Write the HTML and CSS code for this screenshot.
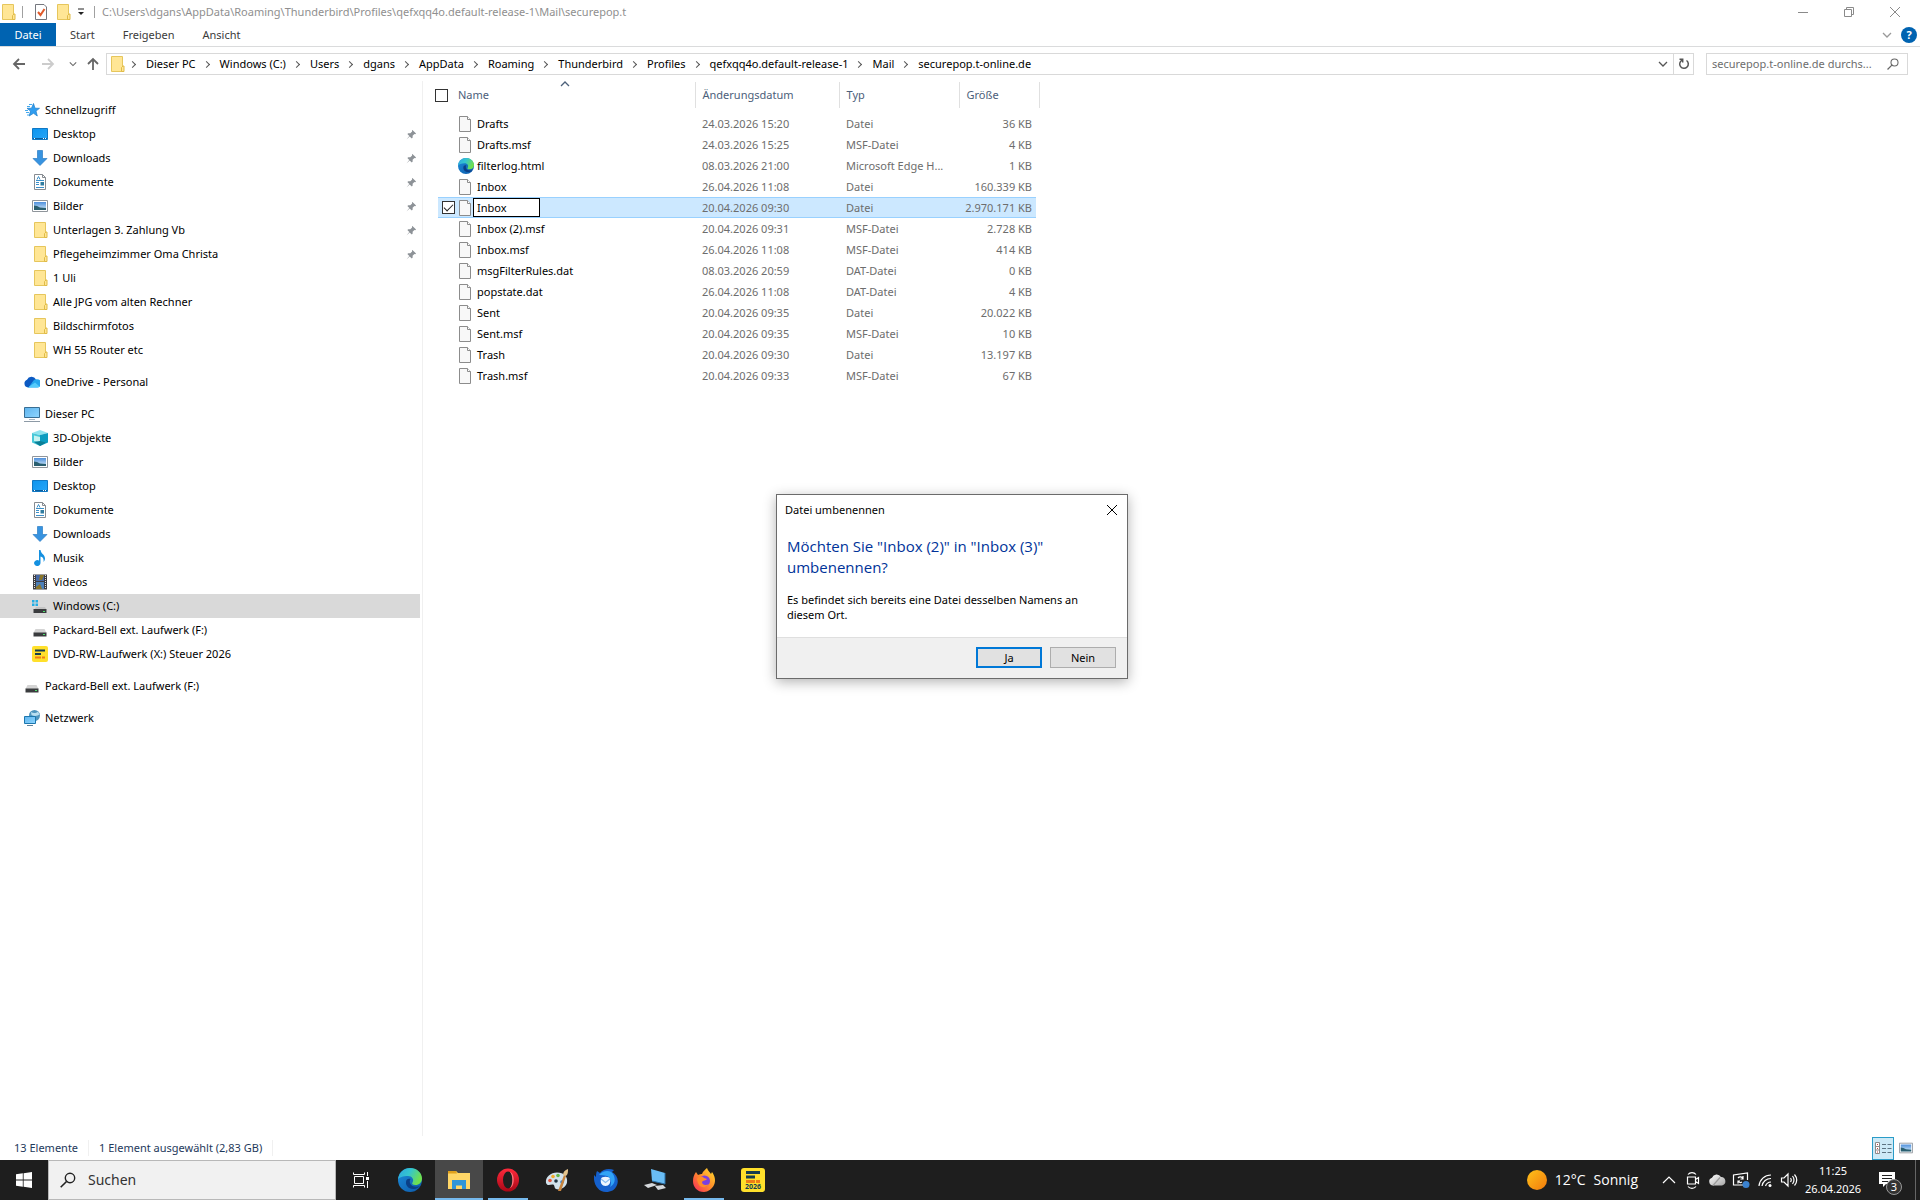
FILE: index.html
```html
<!DOCTYPE html>
<html lang="de">
<head>
    <meta charset="UTF-8">
    <meta name="viewport" content="width=device-width, initial-scale=1.0">
    <title>securepop.t-online.de</title>
    <link rel="stylesheet" href="styles.css">
</head>
<body>
    <!-- icon sprite -->
    <svg class="sprite" aria-hidden="true">
        <defs>
            <linearGradient id="g-desktop" x1="0" y1="0" x2="1" y2="1"><stop offset="0" stop-color="#0c94ee"/><stop offset="1" stop-color="#27a6f8"/></linearGradient>
            <linearGradient id="g-sky" x1="0" y1="0" x2="0" y2="1"><stop offset="0" stop-color="#4d8fdc"/><stop offset="1" stop-color="#d6ecfa"/></linearGradient>
            <linearGradient id="g-screen" x1="0" y1="0" x2="1" y2="1"><stop offset="0" stop-color="#5fb4ee"/><stop offset="1" stop-color="#8fd6ff"/></linearGradient>
            <linearGradient id="g-edge1" x1="0" y1="0" x2="1" y2="0.4"><stop offset="0" stop-color="#2da6e0"/><stop offset="0.5" stop-color="#34c5cf"/><stop offset="1" stop-color="#6fe04e"/></linearGradient>
            <linearGradient id="g-edge2" x1="0" y1="0" x2="1" y2="1"><stop offset="0" stop-color="#1c8ddb"/><stop offset="1" stop-color="#0c58a8"/></linearGradient>
            <linearGradient id="g-opera" x1="0" y1="0" x2="0" y2="1"><stop offset="0" stop-color="#ff2a3c"/><stop offset="1" stop-color="#a80716"/></linearGradient>
            <linearGradient id="g-sun" x1="0" y1="0" x2="1" y2="1"><stop offset="0" stop-color="#ffc21a"/><stop offset="1" stop-color="#f27a0c"/></linearGradient>
            <linearGradient id="g-fox" x1="1" y1="0" x2="0" y2="1"><stop offset="0" stop-color="#ffe22e"/><stop offset="0.5" stop-color="#ff8a2a"/><stop offset="1" stop-color="#f5245f"/></linearGradient>
            <linearGradient id="g-cloud" x1="0" y1="0" x2="1" y2="1"><stop offset="0" stop-color="#ffffff"/><stop offset="1" stop-color="#a5a5a5"/></linearGradient>
        </defs>
        <symbol id="i-folder" viewBox="0 0 16 16"><path d="M2.5.5h11v15h-11z" fill="#ffe695" stroke="#e6c65c"/><path d="M12.500 11.500l1.500-1.500h1v5.500h-2.500z" fill="#ffe695" stroke="#e0bb47"/></symbol>
        <symbol id="i-page" viewBox="0 0 16 16"><path d="M1.500.5h8l3 3v12h-11z" fill="#f8f8f8" stroke="#8c8c8c"/><path d="M9.500 .5v3h3" fill="#fff" stroke="#8c8c8c"/></symbol>
        <symbol id="i-props" viewBox="0 0 16 16"><path d="M2.500.5h8.500l2.500 2.500v12.500h-11z" fill="#fff" stroke="#74777e"/><path d="M5 8l2.500 3 4-6" fill="none" stroke="#e05a2b" stroke-width="2"/></symbol>
        <symbol id="i-star" viewBox="0 0 16 16"><path d="M9.500 1.500l1.500 4.700 4.500.1-3.500 2.800 1.300 4.900-3.800-2.700L5.200 14l1.300-4.900L3 6.300l4.500-.1z" fill="#2f9df0" stroke="#1c7cc9" stroke-width=".7"/><path d="M5 2.500h3M3 4.500h3M1 8.500h3M2 10.500h3M3 13h2" stroke="#43a9ee"/></symbol>
        <symbol id="i-desktop" viewBox="0 0 16 16"><path d="M.5 2.500h15v11h-15z" fill="url(#g-desktop)" stroke="#1078c4"/><path d="M1 12.500h14" stroke="#0a5e9e"/><path d="M2 12.500h1m8 0h1m1 0h1" stroke="#fff"/></symbol>
        <symbol id="i-down" viewBox="0 0 16 16"><path d="M5.500.5h5v8H15L8 15.500 1 8.500h4.500z" fill="#3793e0" stroke="#2b7cc4" stroke-width=".7"/></symbol>
        <symbol id="i-doc" viewBox="0 0 16 16"><path d="M2.500.5h8l3 3v12h-11z" fill="#fff" stroke="#868b91"/><path d="M10.500.5v3h3" fill="none" stroke="#868b91"/><path d="M5 5.500l1.500-3L8 5.500M4 6.500h8M4 8.500h3M4 10.500h3M4 13.500h8" fill="none" stroke="#3c90c9"/><path d="M8.500 8h3.500v3.500H8.500z" fill="#307ca0"/></symbol>
        <symbol id="i-pic" viewBox="0 0 16 16"><path d="M.5 2.500h15v11h-15z" fill="#fff" stroke="#8f959b"/><path d="M2 4h12v8H2z" fill="url(#g-sky)"/><path d="M2 7.500l3 .5 3 1.500 6 .5v2H2z" fill="#2a5f70"/></symbol>
        <symbol id="i-cloud" viewBox="0 0 16 16"><path d="M4 13.500A4 4 0 0 1 3 5.800 5 5 0 0 1 12 5.500l-7 8z" fill="#0c59c2"/><path d="M4.500 13.500L9.500 6.500a4 4 0 0 1 3.500-1.200 4 4 0 0 1 0 8.200z" fill="#26a6ee"/><path d="M4 13.500l7-5 4.500 4c-.5.700-1.300 1-2.500 1z" fill="#55cbfb"/></symbol>
        <symbol id="i-pc" viewBox="0 0 16 16"><path d="M.5 1.500h15v10H.5z" fill="url(#g-screen)" stroke="#386e94"/><path d="M5 13.500h6" stroke="#a7b6c2"/><path d="M0 15.500h16" stroke="#8d9aa6"/></symbol>
        <symbol id="i-3d" viewBox="0 0 16 16"><path d="M0 3l8-3 8 3-8 2z" fill="#8fe3ee"/><path d="M0 3l8 2v11L0 12.500z" fill="#47c8d8"/><path d="M8 5l8-2v9.500L8 16z" fill="#0b9cc0"/><path d="M2 5.500l6 1.500v5l-6-1z" fill="#c6f3f1"/><path d="M2 12l6-1 6 1.500L8 16z" fill="#0b7f96"/></symbol>
        <symbol id="i-music" viewBox="0 0 16 16"><path d="M7 0h1.500c.5 4 4.500 4.500 4.500 8.500 0 1.500-.7 2.500-1.500 3.500C12 9 11 7 8.500 6.500V13A3.200 3 0 1 1 7 10.500z" fill="#1490e0"/></symbol>
        <symbol id="i-video" viewBox="0 0 16 16"><path d="M1 0.500h14v15H1z" fill="#3d3d42"/><path d="M2.500 1v14M13.500 1v14" stroke="#e4e4e4" stroke-dasharray="1 1"/><path d="M4 1h8v6H4z" fill="#4568a5"/><path d="M4 8h8v7H4z" fill="#4c7fb8"/><path d="M8 1h4l-2 5H7zM4 13l4-3 2 5H4z" fill="#8b762a"/></symbol>
        <symbol id="i-disk" viewBox="0 0 16 16"><path d="M3.500 7h9L14.500 11h-13z" fill="#d4d4d4"/><path d="M1.500 10.500h13v4h-13z" fill="#3a3c3e"/><path d="M11 12.500h2" stroke="#4ee06c"/></symbol>
        <symbol id="i-windisk" viewBox="0 0 16 16"><path d="M4 9h9L14.500 11.500h-12z" fill="#c3c3c3"/><path d="M1.500 11h13v4h-13z" fill="#3a3c3e"/><path d="M11 13.500h2" stroke="#4ee06c"/><path d="M0 2h2.500v2.500H0zM3.500 2H6v2.500H3.500zM0 5.500h2.500V8H0zM3.500 5.500H6V8H3.500z" fill="#22aee6"/></symbol>
        <symbol id="i-steuer" viewBox="0 0 16 16"><rect width="16" height="16" rx="2" fill="#ffe02b"/><path d="M3 4.500h10M3 8h6" stroke="#163e4e" stroke-width="2"/><path d="M3 11.500h6M10 11.500h3" stroke="#ef7d16" stroke-width="2"/></symbol>
        <symbol id="i-net" viewBox="0 0 16 16"><circle cx="10.500" cy="5.500" r="5.500" fill="#4f94bd"/><path d="M7 2c3 2 5 1 7-.5l1.500 3c-2 1.500-5 2-8 .5z" fill="#b9def0"/><path d="M.5 6.500h11v7H.5z" fill="url(#g-screen)" stroke="#1c77ae"/><path d="M3 15.500h6" stroke="#5f8299"/></symbol>
        <symbol id="i-pin" viewBox="0 0 12 12"><path d="M7 1l4 4-1 .6-.8-.2-2 2 .1 2-1 1L4 8.200.5 11.500 3.600 7.600 1.500 5.500l1-1 2.200.1 2-2L6.500 1.500z" fill="#8d9297"/></symbol>
        <symbol id="i-edge" viewBox="0 0 24 24"><circle cx="12" cy="12" r="12" fill="url(#g-edge2)"/><path d="M0 11.500C.8 4.500 6 0 12 0c7 0 12 5 12 10.500 0 4-3 6.500-6.500 6.500-3 0-4-1.200-3-2.500 2-3-.5-6.500-4.500-6.500-5 0-9 1.500-10 3.500z" fill="url(#g-edge1)"/><path d="M8.500 12c-2 5 2 9.500 7.500 9 2.500 0 5-1.500 6-3-3 1.500-9 1-10-3-.6-2 0-3 .5-4-1.500-.5-3 0-4 1z" fill="#0a3f86"/></symbol>
        <symbol id="i-search" viewBox="0 0 16 16"><circle cx="10" cy="6" r="4.700" fill="none" stroke="currentColor" stroke-width="1.400"/><path d="M6.500 9.500L.7 15.300" stroke="currentColor" stroke-width="1.600"/></symbol>
        <symbol id="i-chev" viewBox="0 0 10 10"><path d="M1 3l4 4 4-4" fill="none" stroke="currentColor" stroke-width="1.300"/></symbol>
        <symbol id="i-arrow" viewBox="0 0 14 14"><path d="M13 7H2M7 2L2 7l5 5" fill="none" stroke="currentColor" stroke-width="1.800"/></symbol>
    </svg>

    <header class="titlebar">
        <svg class="icon"><use href="#i-folder"/></svg>
        <span class="divider"></span>
        <button class="quick" aria-label="Eigenschaften"><svg class="icon"><use href="#i-props"/></svg></button>
        <button class="quick" aria-label="Neuer Ordner"><svg class="icon"><use href="#i-folder"/></svg></button>
        <button class="quick" aria-label="Anpassen"><svg width="8" height="8" viewBox="0 0 8 8"><path d="M1 1h6" stroke="#222"/><path d="M1 4h6L4 7z" fill="#222"/></svg></button>
        <span class="divider"></span>
        <span class="title">C:\Users\dgans\AppData\Roaming\Thunderbird\Profiles\qefxqq4o.default-release-1\Mail\securepop.t</span>
        <div class="window-buttons">
            <button aria-label="Minimieren"><svg width="10" height="10" viewBox="0 0 10 10"><path d="M0 5.500h10"/></svg></button>
            <button aria-label="Verkleinern"><svg width="10" height="10" viewBox="0 0 10 10"><path d="M.5 2.500h7v7h-7zM2.500 2.500v-2h7v7h-2"/></svg></button>
            <button aria-label="Schließen"><svg width="10" height="10" viewBox="0 0 10 10"><path d="M0 0l10 10M10 0L0 10"/></svg></button>
        </div>
    </header>

    <nav class="ribbon">
        <button class="tab tab-file">Datei</button>
        <button class="tab">Start</button>
        <button class="tab">Freigeben</button>
        <button class="tab">Ansicht</button>
        <div class="ribbon-right">
            <button aria-label="Menüband erweitern"><svg width="10" height="10"><use href="#i-chev"/></svg></button>
            <button class="help" aria-label="Hilfe">?</button>
        </div>
    </nav>

    <div class="address-row">
        <div class="history">
            <button class="back" aria-label="Zurück"><svg><use href="#i-arrow"/></svg></button>
            <button class="forward" aria-label="Vorwärts"><svg><use href="#i-arrow"/></svg></button>
            <button class="recent" aria-label="Zuletzt besucht"><svg><use href="#i-chev"/></svg></button>
            <button class="up" aria-label="Nach oben"><svg><use href="#i-arrow"/></svg></button>
        </div>
        <div class="address">
            <svg class="icon"><use href="#i-folder"/></svg>
            <ol class="crumbs">
                <li><a href="#">Dieser PC</a></li>
                <li><a href="#">Windows (C:)</a></li>
                <li><a href="#">Users</a></li>
                <li><a href="#">dgans</a></li>
                <li><a href="#">AppData</a></li>
                <li><a href="#">Roaming</a></li>
                <li><a href="#">Thunderbird</a></li>
                <li><a href="#">Profiles</a></li>
                <li><a href="#">qefxqq4o.default-release-1</a></li>
                <li><a href="#">Mail</a></li>
                <li><a href="#">securepop.t-online.de</a></li>
            </ol>
            <button class="address-drop" aria-label="Vorherige Orte"><svg width="10" height="10"><use href="#i-chev"/></svg></button>
            <button class="refresh" aria-label="Aktualisieren"><svg width="12" height="12" viewBox="0 0 12 12"><path d="M8.500 2.500a4.300 4.300 0 1 1-4.500-.3M1.500 1.200h3.200v3.300" fill="none" stroke="#555" stroke-width="1.500"/></svg></button>
        </div>
        <div class="search">
            <input type="text" aria-label="Suche" placeholder="securepop.t-online.de durchs...">
            <svg width="12" height="12"><use href="#i-search"/></svg>
        </div>
    </div>

    <main class="content">
        <aside class="sidebar">
            <ul class="tree">
                <li class="root"><svg class="icon"><use href="#i-star"/></svg><a href="#">Schnellzugriff</a></li>
                <li><svg class="icon"><use href="#i-desktop"/></svg><a href="#">Desktop</a><svg class="pin"><use href="#i-pin"/></svg></li>
                <li><svg class="icon"><use href="#i-down"/></svg><a href="#">Downloads</a><svg class="pin"><use href="#i-pin"/></svg></li>
                <li><svg class="icon"><use href="#i-doc"/></svg><a href="#">Dokumente</a><svg class="pin"><use href="#i-pin"/></svg></li>
                <li><svg class="icon"><use href="#i-pic"/></svg><a href="#">Bilder</a><svg class="pin"><use href="#i-pin"/></svg></li>
                <li><svg class="icon"><use href="#i-folder"/></svg><a href="#">Unterlagen 3. Zahlung Vb</a><svg class="pin"><use href="#i-pin"/></svg></li>
                <li><svg class="icon"><use href="#i-folder"/></svg><a href="#">Pflegeheimzimmer Oma Christa</a><svg class="pin"><use href="#i-pin"/></svg></li>
                <li><svg class="icon"><use href="#i-folder"/></svg><a href="#">1 Uli</a></li>
                <li><svg class="icon"><use href="#i-folder"/></svg><a href="#">Alle JPG vom alten Rechner</a></li>
                <li><svg class="icon"><use href="#i-folder"/></svg><a href="#">Bildschirmfotos</a></li>
                <li><svg class="icon"><use href="#i-folder"/></svg><a href="#">WH 55 Router etc</a></li>
            </ul>
            <ul class="tree">
                <li class="root"><svg class="icon"><use href="#i-cloud"/></svg><a href="#">OneDrive - Personal</a></li>
            </ul>
            <ul class="tree">
                <li class="root"><svg class="icon"><use href="#i-pc"/></svg><a href="#">Dieser PC</a></li>
                <li><svg class="icon"><use href="#i-3d"/></svg><a href="#">3D-Objekte</a></li>
                <li><svg class="icon"><use href="#i-pic"/></svg><a href="#">Bilder</a></li>
                <li><svg class="icon"><use href="#i-desktop"/></svg><a href="#">Desktop</a></li>
                <li><svg class="icon"><use href="#i-doc"/></svg><a href="#">Dokumente</a></li>
                <li><svg class="icon"><use href="#i-down"/></svg><a href="#">Downloads</a></li>
                <li><svg class="icon"><use href="#i-music"/></svg><a href="#">Musik</a></li>
                <li><svg class="icon"><use href="#i-video"/></svg><a href="#">Videos</a></li>
                <li class="current"><svg class="icon"><use href="#i-windisk"/></svg><a href="#">Windows (C:)</a></li>
                <li><svg class="icon"><use href="#i-disk"/></svg><a href="#">Packard-Bell ext. Laufwerk (F:)</a></li>
                <li><svg class="icon"><use href="#i-steuer"/></svg><a href="#">DVD-RW-Laufwerk (X:) Steuer 2026</a></li>
            </ul>
            <ul class="tree">
                <li class="root"><svg class="icon"><use href="#i-disk"/></svg><a href="#">Packard-Bell ext. Laufwerk (F:)</a></li>
            </ul>
            <ul class="tree">
                <li class="root"><svg class="icon"><use href="#i-net"/></svg><a href="#">Netzwerk</a></li>
            </ul>
        </aside>

        <section class="files">
            <table>
                <colgroup>
                    <col class="col-gutter"><col class="col-check"><col class="col-name"><col class="col-date"><col class="col-type"><col class="col-size"><col class="col-end">
                </colgroup>
                <thead>
                    <tr>
                        <th colspan="2"><input type="checkbox" class="check" aria-label="Alle auswählen"></th>
                        <th class="sorted">Name<svg class="sort" width="10" height="10"><use href="#i-chev"/></svg></th>
                        <th>Änderungsdatum</th>
                        <th>Typ</th>
                        <th colspan="2">Größe</th>
                    </tr>
                </thead>
                <tbody>
                    <tr><td></td><td></td><td><div class="file"><svg class="icon"><use href="#i-page"/></svg>Drafts</div></td><td>24.03.2026 15:20</td><td>Datei</td><td>36 KB</td><td></td></tr>
                    <tr><td></td><td></td><td><div class="file"><svg class="icon"><use href="#i-page"/></svg>Drafts.msf</div></td><td>24.03.2026 15:25</td><td>MSF-Datei</td><td>4 KB</td><td></td></tr>
                    <tr><td></td><td></td><td><div class="file"><svg class="icon"><use href="#i-edge"/></svg>filterlog.html</div></td><td>08.03.2026 21:00</td><td>Microsoft Edge H...</td><td>1 KB</td><td></td></tr>
                    <tr><td></td><td></td><td><div class="file"><svg class="icon"><use href="#i-page"/></svg>Inbox</div></td><td>26.04.2026 11:08</td><td>Datei</td><td>160.339 KB</td><td></td></tr>
                    <tr class="selected"><td></td><td><input type="checkbox" class="check" aria-label="Inbox auswählen" checked></td><td><div class="file"><svg class="icon"><use href="#i-page"/></svg><input type="text" class="rename" aria-label="Neuer Name" value="Inbox"></div></td><td>20.04.2026 09:30</td><td>Datei</td><td>2.970.171 KB</td><td></td></tr>
                    <tr><td></td><td></td><td><div class="file"><svg class="icon"><use href="#i-page"/></svg>Inbox (2).msf</div></td><td>20.04.2026 09:31</td><td>MSF-Datei</td><td>2.728 KB</td><td></td></tr>
                    <tr><td></td><td></td><td><div class="file"><svg class="icon"><use href="#i-page"/></svg>Inbox.msf</div></td><td>26.04.2026 11:08</td><td>MSF-Datei</td><td>414 KB</td><td></td></tr>
                    <tr><td></td><td></td><td><div class="file"><svg class="icon"><use href="#i-page"/></svg>msgFilterRules.dat</div></td><td>08.03.2026 20:59</td><td>DAT-Datei</td><td>0 KB</td><td></td></tr>
                    <tr><td></td><td></td><td><div class="file"><svg class="icon"><use href="#i-page"/></svg>popstate.dat</div></td><td>26.04.2026 11:08</td><td>DAT-Datei</td><td>4 KB</td><td></td></tr>
                    <tr><td></td><td></td><td><div class="file"><svg class="icon"><use href="#i-page"/></svg>Sent</div></td><td>20.04.2026 09:35</td><td>Datei</td><td>20.022 KB</td><td></td></tr>
                    <tr><td></td><td></td><td><div class="file"><svg class="icon"><use href="#i-page"/></svg>Sent.msf</div></td><td>20.04.2026 09:35</td><td>MSF-Datei</td><td>10 KB</td><td></td></tr>
                    <tr><td></td><td></td><td><div class="file"><svg class="icon"><use href="#i-page"/></svg>Trash</div></td><td>20.04.2026 09:30</td><td>Datei</td><td>13.197 KB</td><td></td></tr>
                    <tr><td></td><td></td><td><div class="file"><svg class="icon"><use href="#i-page"/></svg>Trash.msf</div></td><td>20.04.2026 09:33</td><td>MSF-Datei</td><td>67 KB</td><td></td></tr>
                </tbody>
            </table>
        </section>
    </main>

    <footer class="statusbar">
        <span class="status-item">13 Elemente</span>
        <span class="status-item">1 Element ausgewählt (2,83 GB)</span>
        <div class="views">
            <button class="view active" aria-label="Details"><svg width="18" height="16" viewBox="0 0 18 16"><path d="M1.500 2.500h4v11h-4zM1.500 6.500h4M1.500 10h4" fill="#fff" stroke="#8a8a8a"/><path d="M3 4.500h1M3 8.500h1M3 12h1" stroke="#c04040"/><path d="M8 4.500h4m1.500 0h4M8 8.500h4m1.500 0h4M8 12.500h4m1.500 0h4" stroke="#5d7482"/></svg></button>
            <button class="view" aria-label="Große Symbole"><svg width="14" height="14"><use href="#i-pic"/></svg></button>
        </div>
    </footer>

    <div class="taskbar">
        <button class="start" aria-label="Start"><svg width="16" height="16" viewBox="0 0 16 16"><path d="M0 2.300l6.800-1v6.300H0zM7.600 1.200L16 0v7.600H7.600zM0 8.400h6.800v6.300l-6.800-1zM7.600 8.400H16V16l-8.400-1.200z" fill="#fff"/></svg></button>
        <div class="task-search">
            <svg width="16" height="16"><use href="#i-search"/></svg>
            <input type="text" aria-label="Windows durchsuchen" placeholder="Suchen">
        </div>
        <div class="apps">
            <button class="app" aria-label="Taskansicht"><svg width="18" height="18" viewBox="0 0 18 18"><path d="M2.500 5.500h9v7h-9zM1.500 1.500v2h11v-2M1.500 16.500v-2h11v2M15.500 1v4M15.500 10v7" fill="none" stroke="#fff"/><path d="M14 6h3v3h-3z" fill="#fff"/></svg></button>
            <button class="app" aria-label="Microsoft Edge"><svg width="24" height="24"><use href="#i-edge"/></svg></button>
            <button class="app focused" aria-label="Explorer"><svg width="24" height="24" viewBox="0 0 24 24"><path d="M1 3h8l2 2h12v16H1z" fill="#ffd667"/><path d="M1 3h8l1 2.500H1z" fill="#e0a01c"/><path d="M5 12h14v9h-4v-3.500H9V21H5z" fill="#2f95d8"/></svg></button>
            <button class="app open" aria-label="Opera"><svg width="24" height="24" viewBox="0 0 24 24"><ellipse cx="12" cy="12" rx="11" ry="11.500" fill="url(#g-opera)"/><ellipse cx="12" cy="12" rx="5" ry="8.500" fill="#1f1f1f"/><path d="M14 4c5 1 5 15 0 16 3-3 3-13 0-16z" fill="#ff7479"/></svg></button>
            <button class="app" aria-label="Paint"><svg width="24" height="24" viewBox="0 0 24 24"><path d="M1 15C0 9 6 4.500 12 4.500c7 0 11 4 10 10-1 5-7 8-11 6.500-2-1-1-4-3-4.500C5.500 16 3 19 1 15z" fill="#d2e2ec"/><circle cx="5" cy="12.500" r="1.800" fill="#e2563f"/><circle cx="8" cy="8.500" r="1.800" fill="#f1a92b"/><circle cx="13" cy="7.500" r="1.800" fill="#66b54a"/><circle cx="17" cy="14" r="1.800" fill="#357fd0"/><circle cx="11" cy="13" r="1.800" fill="#1f3340"/><path d="M13 23l6-16 2 1-5 15z" fill="#c7843e"/><path d="M18 7c0-3 2-5 5-6 0 3 0 5-2 7z" fill="#e3c28b"/></svg></button>
            <button class="app" aria-label="Thunderbird"><svg width="24" height="24" viewBox="0 0 24 24"><path d="M0 7l2 2c0-2 0-4 1-6l3 2c3-4 9-5 14-3l-2 2c5 3 7 8 5 13-2 5-6 7-11 7C4 24-1 16 0 7z" fill="#1560cc"/><path d="M5 7c4-5 12-5 14-1 3 5 2 10-3 13 2-5 1-9-3-11-3-1-6-1-8-1z" fill="#31a4f6"/><path d="M7 11c0-3 9-3 9 0 1 4-1 7-4.500 7S6 15 7 11z" fill="#eef6ff"/><path d="M7 11l4.500 3.500L16 11" fill="none" stroke="#8abdf0" stroke-width="1.200"/></svg></button>
            <button class="app" aria-label="Remotedesktop"><svg width="24" height="24" viewBox="0 0 24 24"><path d="M8 1l14 4v11L9 13z" fill="#69bdf5"/><path d="M22 5v11l-13-3" fill="none" stroke="#2b6fa5"/><path d="M1 17l8-2 5 2-9 3zM12 18l8-1 3 3-8 2z" fill="#d5d9dc"/></svg></button>
            <button class="app open" aria-label="Firefox"><svg width="24" height="24" viewBox="0 0 24 24"><path d="M4 4l2 3c2-1 3-1 4-1 1-3 3-4 5-6 1 3 3 4 4 6l1-2c3 4 4 9 2 13-2 4-6 7-10 7C5 24 1 19 1 13c0-4 1-6 3-9z" fill="url(#g-fox)"/><circle cx="12.500" cy="13" r="5.500" fill="#7a3fe0"/><path d="M5 11c2-3 5-3 7-1l3 1c-1 2-4 1-5 3 0 3 4 4 7 2-2 4-8 4-10 1-1-2-2-4-2-6z" fill="#ff8a2a"/></svg></button>
            <button class="app" aria-label="Steuer 2026"><span class="steuer"><svg width="16" height="12" viewBox="0 0 16 12"><path d="M1 1.500h14M1 6h9" stroke="#163e4e" stroke-width="3"/><path d="M1 10.500h9M11 10.500h4" stroke="#ef7d16" stroke-width="3"/></svg><b>2026</b></span></button>
        </div>
        <div class="tray">
            <button class="weather"><svg width="20" height="20" viewBox="0 0 20 20"><circle cx="10" cy="10" r="10" fill="url(#g-sun)"/></svg><span>12°C</span><span>Sonnig</span></button>
            <button class="tray-icon" aria-label="Ausgeblendete Symbole"><svg viewBox="0 0 18 18"><path d="M3 12l6-6 6 6" /></svg></button>
            <button class="tray-icon" aria-label="Besprechung"><svg viewBox="0 0 18 18"><path d="M3.500 6h8v7h-8zM11.500 8.500l3-2v6l-3-2M4 3.500c2-2.500 6-2.500 8 0M4 15.500c2 2.500 6 2.500 8 0"/></svg></button>
            <button class="tray-icon" aria-label="OneDrive"><svg viewBox="0 0 18 18"><path d="M5 14.500a4 4 0 0 1-1-7.800 5 5 0 0 1 9-.7 4.300 4.300 0 0 1 1 8.500z" fill="url(#g-cloud)" stroke="none"/><path d="M5 14.500l7-8" stroke="#999"/></svg></button>
            <button class="tray-icon" aria-label="Windows Update"><svg viewBox="0 0 18 18"><path d="M13 14H1.500V4l14-2v7M11 7.500A3 3 0 0 0 6 7M6 10a3 3 0 0 0 4 1M11 5v3H8.500M6 12.500V10h2"/><circle cx="14" cy="13.500" r="3.500" fill="#3b82cf" stroke="none"/></svg></button>
            <button class="tray-icon" aria-label="Netzwerk"><svg viewBox="0 0 18 18"><path d="M3 15A12 12 0 0 1 15 4M6 15a9 9 0 0 1 9-7.500M9.500 15A6 6 0 0 1 15 11"/><circle cx="14" cy="14.500" r="1.500" fill="#fff" stroke="none"/></svg></button>
            <button class="tray-icon" aria-label="Lautsprecher"><svg viewBox="0 0 18 18"><path d="M1.500 7h2.500l4-4v12l-4-4H1.500zM10.500 7q1.500 2 0 4M12.500 5q3 4 0 8M14.500 3.500q4.500 5.500 0 11"/></svg></button>
            <button class="clock"><span>11:25</span><span>26.04.2026</span></button>
            <button class="notify" aria-label="Benachrichtigungen"><svg width="18" height="18" viewBox="0 0 18 18"><path d="M1 1h16v12H8l-3 3v-3H1z" fill="#fff"/><path d="M4 4.500h10M4 7.500h10M4 10.500h6" stroke="#222"/></svg><span class="badge">3</span></button>
            <span class="show-desktop"></span>
        </div>
    </div>

    <div class="dialog" role="dialog" aria-labelledby="dialog-title">
        <div class="dialog-head">
            <span id="dialog-title">Datei umbenennen</span>
            <button class="dialog-close" aria-label="Schließen"><svg width="10" height="10" viewBox="0 0 10 10"><path d="M0 0l10 10M10 0L0 10" stroke="#000"/></svg></button>
        </div>
        <div class="dialog-body">
            <h1>Möchten Sie "Inbox (2)" in "Inbox (3)" umbenennen?</h1>
            <p>Es befindet sich bereits eine Datei desselben Namens an diesem Ort.</p>
        </div>
        <div class="dialog-foot">
            <button class="dialog-btn primary">Ja</button>
            <button class="dialog-btn">Nein</button>
        </div>
    </div>
</body>
</html>
```
FILE: styles.css
```css
* {
    box-sizing: border-box;
}

body {
    margin: 0;
    height: 100vh;
    display: flex;
    flex-direction: column;
    overflow: hidden;
    background: #fff;
    color: #000;
    font-family: 'Noto Sans', 'Open Sans', sans-serif;
    font-size: 11px;
    line-height: 16px;
}

button {
    display: flex;
    align-items: center;
    justify-content: center;
    margin: 0;
    padding: 0;
    border: none;
    background: none;
    color: inherit;
    font: inherit;
}

input {
    font: inherit;
    color: inherit;
}

a {
    color: inherit;
    text-decoration: none;
}

ul, ol {
    list-style: none;
    margin: 0;
    padding: 0;
}

svg {
    display: block;
    flex: none;
}

.sprite {
    position: absolute;
    width: 0;
    height: 0;
}

.icon {
    width: 16px;
    height: 16px;
}

/* title bar */
.titlebar {
    display: flex;
    align-items: center;
    height: 23px;
    padding-right: 2px;
}

.divider {
    width: 1px;
    height: 12px;
    margin: 0 7px 0 6px;
    background: #a0a0a0;
}

.quick {
    width: 22px;
}

.quick:nth-of-type(3) {
    width: 14px;
}

.title {
    color: #8f8f8f;
}

.window-buttons {
    display: flex;
    margin-left: auto;
}

.window-buttons button {
    width: 46px;
    height: 20px;
}

.window-buttons path {
    fill: none;
    stroke: #8a8a8a;
}

/* ribbon */
.ribbon {
    display: flex;
    height: 24px;
    border-bottom: 1px solid #dadbdc;
}

.tab {
    padding: 0 14px;
    color: #3b3b3b;
}

.tab-file {
    width: 56px;
    background: #0063b1;
    color: #fff;
}

.ribbon-right {
    display: flex;
    align-items: center;
    gap: 9px;
    margin-left: auto;
    padding-right: 3px;
    color: #999;
}

.help {
    width: 16px;
    height: 16px;
    border-radius: 50%;
    background: #0063b1;
    color: #fff;
    font-weight: bold;
}

/* address row */
.address-row {
    display: flex;
    align-items: center;
    padding: 6px 12px;
}

.history {
    display: flex;
    align-items: center;
    width: 94px;
    color: #666;
}

.history button {
    width: 14px;
}

.history svg {
    width: 14px;
    height: 14px;
}

.history .forward {
    margin-left: 15px;
    color: #ccc;
}

.forward svg {
    transform: scaleX(-1);
}

.history .recent {
    margin-left: 11px;
}

.history .recent svg {
    width: 8px;
    height: 8px;
}

.history .up {
    margin-left: 6px;
}

.up svg {
    transform: rotate(90deg);
}

.address {
    flex: 1;
    display: flex;
    align-items: center;
    height: 22px;
    padding-left: 2px;
    border: 1px solid #d9d9d9;
}

.crumbs {
    display: flex;
    gap: 8px;
    margin-left: 5px;
}

.crumbs li {
    display: flex;
    align-items: center;
}

.crumbs li::before {
    content: '';
    width: 4px;
    height: 4px;
    margin-right: 11px;
    border: solid #555;
    border-width: 1px 1px 0 0;
    transform: rotate(45deg);
}

.address-drop {
    width: 20px;
    margin-left: auto;
    color: #555;
}

.refresh {
    width: 20px;
    height: 20px;
    border-left: 1px solid #d9d9d9;
}

.search {
    display: flex;
    align-items: center;
    width: 202px;
    height: 22px;
    margin-left: 12px;
    padding: 0 8px 0 5px;
    border: 1px solid #d9d9d9;
    color: #666;
}

.search input {
    flex: 1;
    min-width: 0;
    padding: 0;
    border: none;
    outline: none;
    background: none;
}

.search input::placeholder {
    color: #6d6d6d;
}

/* content */
.content {
    flex: 1;
    display: flex;
    min-height: 0;
}

.sidebar {
    width: 423px;
    padding: 17px 2px 0 0;
    border-right: 1px solid #f0f0f0;
}

.tree {
    margin-bottom: 8px;
}

.tree li {
    display: flex;
    align-items: center;
    gap: 5px;
    height: 24px;
    padding: 0 3px 0 32px;
}

.tree .root {
    padding-left: 24px;
}

.tree .current {
    background: #d9d9d9;
}

.pin {
    width: 11px;
    height: 11px;
    margin-left: auto;
}

/* file list */
.files {
    flex: 1;
    padding: 1px 0 0 7px;
}

table {
    width: 609px;
    table-layout: fixed;
    border-collapse: collapse;
}

.col-gutter { width: 8px; }
.col-check { width: 20px; }
.col-name { width: 237px; }
.col-date { width: 144px; }
.col-type { width: 120px; }
.col-size { width: 77px; }
.col-end { width: 3px; }

th {
    position: relative;
    height: 26px;
    padding: 0 0 0 7px;
    border-right: 1px solid #e0e0e0;
    color: #4c607a;
    font-weight: normal;
    text-align: left;
}

th:first-child {
    padding-left: 5px;
    border-right: none;
}

.sorted {
    padding-left: 0;
}

.sort {
    position: absolute;
    top: -3px;
    left: 102px;
    transform: scaleY(-1);
}

tbody::before {
    content: '';
    display: block;
    height: 5px;
}

td {
    height: 21px;
    padding: 0 0 0 7px;
    color: #6d6d6d;
    white-space: nowrap;
}

td:nth-child(1), td:nth-child(3), td:nth-child(7) {
    padding: 0;
}

td:nth-child(2) {
    padding: 0 0 0 4px;
}

td:nth-child(6) {
    padding: 0 4px 0 0;
    text-align: right;
}

.file {
    display: flex;
    align-items: center;
    gap: 3px;
    height: 21px;
    color: #000;
}

.selected td:not(:first-child):not(:last-child) {
    background: #cce8ff;
    box-shadow: inset 0 1px #99d1ff, inset 0 -1px #99d1ff;
}

.check {
    display: block;
    appearance: none;
    width: 13px;
    height: 13px;
    margin: 0;
    border: 1px solid #333;
    background: #fff;
}

.check:checked::after {
    content: '';
    display: block;
    width: 8px;
    height: 4px;
    margin: 2px 1px;
    border: solid #222;
    border-width: 0 0 1px 1px;
    transform: rotate(-45deg);
}

.rename {
    width: 67px;
    height: 19px;
    margin-left: -4px;
    padding: 0 3px;
    border: 1px solid #000;
    outline: none;
    background: #fff;
}

/* status bar */
.statusbar {
    display: flex;
    align-items: center;
    height: 24px;
    padding: 0 3px 0 4px;
    color: #1e395b;
}

.status-item {
    padding: 0 10px;
    border-right: 1px solid #f0f0f0;
}

.views {
    display: flex;
    gap: 1px;
    margin-left: auto;
}

.view {
    width: 22px;
    height: 23px;
}

.view.active {
    border: 1px solid #2a9cc8;
    background: #cdeaf7;
}

/* taskbar */
.taskbar {
    display: flex;
    height: 40px;
    background: #1e1e1e;
    color: #fff;
}

.start {
    width: 48px;
}

.task-search {
    display: flex;
    align-items: center;
    gap: 12px;
    width: 288px;
    padding-left: 11px;
    border: 1px solid #b8b8b8;
    background: #f1f1f1;
    color: #222;
}

.task-search input {
    flex: 1;
    min-width: 0;
    padding: 0;
    border: none;
    outline: none;
    background: none;
    font-size: 14px;
}

.task-search input::placeholder {
    color: #333;
}

.apps {
    display: flex;
    gap: 1px;
    padding-left: 1px;
}

.app {
    width: 48px;
    height: 40px;
}

.app.focused {
    background: #484848;
    box-shadow: inset 0 -2px #76b9ed;
}

.app.open {
    background: linear-gradient(#76b9ed, #76b9ed) bottom / 40px 2px no-repeat;
}

.steuer {
    width: 24px;
    height: 24px;
    padding: 3px 4px 0;
    border-radius: 3px;
    background: #ffe02b;
    color: #163e4e;
    font-size: 7px;
    line-height: 8px;
}

.tray {
    display: flex;
    align-items: center;
    margin-left: auto;
}

.weather {
    gap: 8px;
    margin-right: 19px;
    font-family: 'Open Sans', sans-serif;
    font-size: 14px;
}

.tray-icon {
    width: 24px;
    height: 40px;
}

.tray-icon svg {
    width: 18px;
    height: 18px;
    fill: none;
    stroke: #fff;
    stroke-width: 1.2;
}

.clock {
    flex-direction: column;
    width: 64px;
    line-height: 18px;
}

.notify {
    position: relative;
    width: 44px;
    height: 40px;
    margin-right: 6px;
}

.badge {
    position: absolute;
    left: 21px;
    top: 19px;
    width: 16px;
    height: 16px;
    border: 1px solid #999;
    border-radius: 50%;
    background: #333;
    font-size: 11px;
    line-height: 14px;
}

.show-desktop {
    width: 5px;
    height: 40px;
    border-left: 1px solid #666;
}

/* rename dialog */
.dialog {
    position: absolute;
    left: 776px;
    top: 494px;
    width: 352px;
    border: 1px solid #6b6b6b;
    background: #fff;
    box-shadow: 0 3px 12px rgba(0, 0, 0, 0.3);
}

.dialog-head {
    display: flex;
    align-items: center;
    justify-content: space-between;
    height: 30px;
    padding-left: 8px;
}

.dialog-close {
    width: 30px;
    height: 30px;
}

.dialog-body {
    padding: 11px 24px 15px 10px;
}

.dialog h1 {
    margin: 0 0 14px;
    color: #003399;
    font-family: 'Open Sans', sans-serif;
    font-size: 15px;
    font-weight: normal;
    line-height: 21px;
}

.dialog p {
    margin: 0;
    line-height: 15px;
}

.dialog-foot {
    display: flex;
    justify-content: flex-end;
    gap: 8px;
    padding: 9px 11px 10px;
    border-top: 1px solid #dfdfdf;
    background: #f0f0f0;
}

.dialog-btn {
    width: 66px;
    height: 21px;
    border: 1px solid #adadad;
    background: #e1e1e1;
}

.dialog-btn.primary {
    border: 2px solid #0078d7;
}
```
